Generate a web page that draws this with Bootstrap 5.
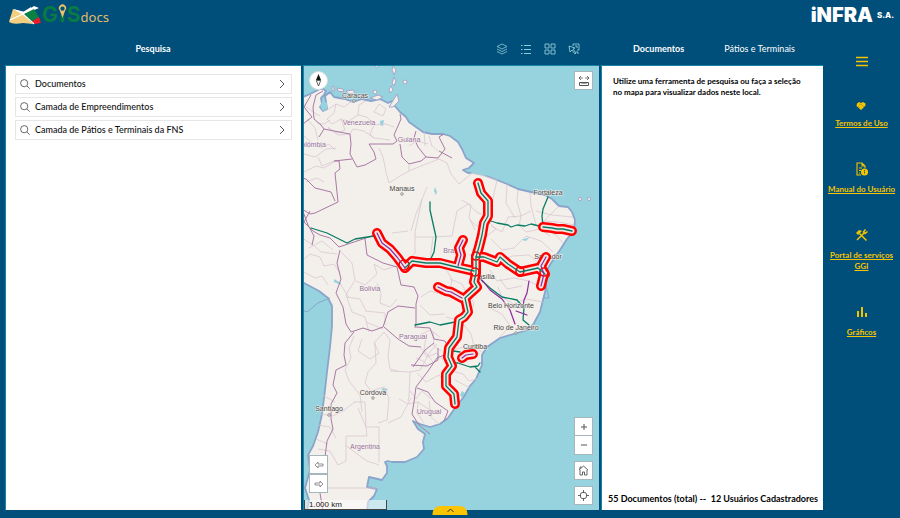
<!DOCTYPE html>
<html lang="pt-BR">
<head>
<meta charset="utf-8">
<meta name="viewport" content="width=device-width, initial-scale=1">
<title>GISdocs</title>
<link href="https://cdn.jsdelivr.net/npm/bootstrap@5.3.0/dist/css/bootstrap.min.css" rel="stylesheet">
<style>
  body { background: #004e7a; font-family: Lato, "Liberation Sans", sans-serif; font-size: 9px; line-height: 12px; color: #222; }
  .topbar { height: 36px; padding: 0 6px 6px 8px; }
  .brand-gis { font: 700 21px/24px Inter, sans-serif; color: #087a43; }
  .brand-docs { font: 400 13px/18px "Noto Sans", sans-serif; color: #e0bd68; }
  .brand-infra { font: 900 20px/24px Inter, sans-serif; }
  .brand-sa { font: 800 8px/12px Inter, sans-serif; }
  .shell { padding-left: 5px; }
  .workspace { display: grid; grid-template-columns: minmax(0, 4fr) minmax(0, 4fr) minmax(0, 3fr); grid-template-rows: 29px 1fr; column-gap: 2px; padding-bottom: 8px; min-width: 0; }
  .head-row { padding-bottom: 4px; }
  .sidebar { width: 77px; }
  .pane { border-top: 1px solid #1685a6; border-left: 1px solid #1685a6; }
  .plain-btn { border: 0; background: none; padding: 0; color: inherit; line-height: 0; }
  .tab-btn { font-size: 9px; line-height: 14px; }
  .tools { color: #8fcbd5; gap: 12px; padding-right: 19px; }
  .search-list { padding: 8px 9px; gap: 3px; }
  .search-item { height: 20px; border: 1px solid #e6e6e6; background: #fff; padding: 0 5px 0 4px; gap: 5px; font-size: 9px; line-height: 12px; font-weight: 500; color: #111; text-align: left; }
  .map-view { background: #97d3df; }
  .map-btn { width: 19px; height: 19px; background: #fff; border: 1px solid #a5b7bd; padding: 0; line-height: 0; color: #555; display: flex; align-items: center; justify-content: center; }
  .map-btn.dial { border-radius: 50%; border-color: #ddd; }
  .map-tl { position: absolute; left: 5px; top: 5px; }
  .map-tr { position: absolute; right: 6px; top: 5px; }
  .map-bl { position: absolute; left: 5px; bottom: 17px; }
  .map-br { position: absolute; right: 6px; bottom: 5px; gap: 6px; }
  .scale { position: absolute; left: 0; bottom: 0; width: 83px; height: 10px; background: rgba(255,255,255,.5); border: 1px solid #444; border-top: 0; padding-left: 4px; font: 8px/9px "Liberation Sans", sans-serif; color: #222; }
  .notice { padding: 10px 16px 0 11px; font-size: 8px; line-height: 11px; }
  .totals { padding: 0 5px 5px 6px; font-size: 9px; line-height: 12px; white-space: nowrap; }
  .side-link { color: #f5c400; font-size: 8px; line-height: 11px; font-weight: 700; gap: 8px; text-align: center; }
  .side-link:hover { color: #ffe26b; }
  .side-nav { padding-top: 16px; gap: 33px; }
  .menu-btn { color: #f5c400; margin-bottom: -8px; }
  .drawer-btn { position: fixed; bottom: 3px; left: 50%; transform: translateX(-50%); width: 35px; height: 9px; background: #fac400; border: 0; border-radius: 8px 8px 0 0; padding: 0; line-height: 0; color: #333; display: flex; align-items: center; justify-content: center; }
  .province { fill: none; stroke: #d5c3d0; stroke-width: .7; }
  .border-line { fill: none; stroke: #a97aa6; stroke-width: 1; }
  .halo { stroke: #f00; stroke-width: 10; }
  .halo-in { stroke: #f1e6e2; stroke-width: 5; }
  .rail { stroke: #087d64; stroke-width: 1.3; }
  .plan { stroke: #8d2aa0; stroke-width: 1.2; }
  .track { fill: none; stroke-linecap: round; stroke-linejoin: round; }
  .city { font: 7px "Liberation Sans", sans-serif; fill: #444; text-anchor: middle; paint-order: stroke; stroke: #f7f3ee; stroke-width: 1; }
  .nation { font: 7px "Liberation Sans", sans-serif; fill: #9672a0; text-anchor: middle; paint-order: stroke; stroke: #f7f3ee; stroke-width: 1; }
</style>
</head>
<body>
<div class="d-flex flex-column min-vh-100">
  <header class="topbar d-flex justify-content-between align-items-center">
    <div class="d-flex align-items-center">
      <svg width="34" height="20" viewBox="0 0 34 20" aria-hidden="true">
        <path d="M5 4 15 10 31 3 26 1 17 7Z" fill="#fff"/>
        <path d="M5 4 1 17Q5 20 15 18L25 19 15 9Z" fill="#f2cf80"/>
        <path d="M5 4 15 10 24 4 23 2 15 7Z" fill="#fff"/>
        <path d="M16 9 26 4 31 12 23 17Z" fill="#0b8145"/>
        <path d="M23 17 31 12 33 18 27 19Z" fill="#ed1c24"/>
        <path d="m15 9 11 10M2 15l13-6" stroke="#fff" stroke-width="1.2"/>
      </svg>
      <span class="brand-gis d-flex">G<svg width="9" height="24" viewBox="0 0 10 26" aria-hidden="true"><path d="M3 13h4v8H3z" fill="#087a43"/><path d="M5 16 2 8a4 4 0 1 1 6 0Z" fill="#e9c46a"/><circle cx="5" cy="6" r="2.4" fill="#004e7a"/></svg>S</span>
      <span class="brand-docs pt-1">docs</span>
    </div>
    <div class="d-flex align-items-center text-white">
      <span class="brand-infra">iNFRA</span><span class="brand-sa ms-1">S.A.</span>
    </div>
  </header>

  <div class="shell d-flex flex-grow-1">
    <main class="workspace flex-grow-1">
      <div class="head-row d-flex justify-content-center align-items-center text-white">
        <h1 class="tab-btn fw-bold m-0">Pesquisa</h1>
      </div>
      <div class="head-row tools d-flex justify-content-end align-items-center">
        <button class="plain-btn" aria-label="Camadas"><svg width="12" height="12" viewBox="0 0 12 12" fill="none" stroke="currentColor" stroke-width=".8"><path d="m6 1 5 2.500L6 6 1 3.500ZM1 6l5 2.500L11 6M1 8.500 6 11l5-2.500"/></svg></button>
        <button class="plain-btn" aria-label="Legenda"><svg width="12" height="12" viewBox="0 0 12 12" fill="none" stroke="currentColor"><path d="M1 2.500h1.500M4 2.500h7M1 6.500h1.500M4 6.500h7M1 10.500h1.500M4 10.500h7"/></svg></button>
        <button class="plain-btn" aria-label="Mapas base"><svg width="12" height="12" viewBox="0 0 12 12" fill="none" stroke="currentColor" stroke-width=".9"><path d="M1 1h4v4H1zM7 1h4v4H7zM1 7h4v4H1zM7 7h4v4H7z"/></svg></button>
        <button class="plain-btn" aria-label="Selecionar"><svg width="12" height="12" viewBox="0 0 12 12" fill="none" stroke="currentColor" stroke-width=".9"><path d="M5 3V1h6v6H9M7 3h2v2M1 3l1 6 2-2 3 4 1-1-3-4 2-1ZM8 9h2v2"/></svg></button>
      </div>
      <div class="head-row d-flex justify-content-center align-items-center text-white ps-1" role="tablist">
        <button class="plain-btn tab-btn fw-bold me-3" role="tab" aria-selected="true">Documentos</button>
        <button class="plain-btn tab-btn ms-4" role="tab" aria-selected="false">Pátios e Terminais</button>
      </div>

      <section class="pane bg-white">
        <div class="search-list d-flex flex-column">
          <button class="search-item d-flex align-items-center"><svg width="10" height="10" viewBox="0 0 10 10" fill="none" stroke="#444" stroke-width=".8"><circle cx="4.200" cy="4.200" r="3.600"/><path d="m7 7 2.700 2.700"/></svg><span class="flex-grow-1">Documentos</span><svg width="8" height="10" viewBox="0 0 8 10" fill="none" stroke="#444" stroke-width=".9"><path d="m2 1 4 4-4 4"/></svg></button>
          <button class="search-item d-flex align-items-center"><svg width="10" height="10" viewBox="0 0 10 10" fill="none" stroke="#444" stroke-width=".8"><circle cx="4.200" cy="4.200" r="3.600"/><path d="m7 7 2.700 2.700"/></svg><span class="flex-grow-1">Camada de Empreendimentos</span><svg width="8" height="10" viewBox="0 0 8 10" fill="none" stroke="#444" stroke-width=".9"><path d="m2 1 4 4-4 4"/></svg></button>
          <button class="search-item d-flex align-items-center"><svg width="10" height="10" viewBox="0 0 10 10" fill="none" stroke="#444" stroke-width=".8"><circle cx="4.200" cy="4.200" r="3.600"/><path d="m7 7 2.700 2.700"/></svg><span class="flex-grow-1">Camada de Pátios e Terminais da FNS</span><svg width="8" height="10" viewBox="0 0 8 10" fill="none" stroke="#444" stroke-width=".9"><path d="m2 1 4 4-4 4"/></svg></button>
        </div>
      </section>

      <section class="pane map-view position-relative overflow-hidden" aria-label="Mapa">
        <svg class="position-absolute top-0 start-0 w-100 h-100" viewBox="304 66 295 444" preserveAspectRatio="xMidYMid slice">
          <defs>
            <path id="land" d="M300 98 308 95 314 92 322 88 326 91 324 95 321 98 322 104 320 107 323 111 327 109 326 102 325 96 330 92 334 97 345 99 353 102 362 99 371 101 380 99 388 103 392 101 394 105 400 112 406 117 409 122 416 127 423 132 432 134 443 134 450 136 458 142 462 149 466 158 474 163 469 168 463 170 468 173 476 172 484 175 497 180 507 184 518 189 531 192 545 195 552 199 559 206 568 207 572 212 575 220 574 231 567 239 560 250 553 260 548 268 546 278 546 288 543 300 540 312 534 323 528 330 517 333 500 338 487 347 482 355 482 365 476 379 470 386 463 398 455 408 448 418 440 424 430 427 420 424 413 421 418 429 425 434 423 442 424 449 417 457 405 462 392 462 388 461 385 462 387 466 387 473 382 480 369 477 367 487 377 489 374 496 368 502 367 512H307L309 500 305 488 310 470 308 455 313 446 318 432 322 414 325 390 327 372 330 347 332 326 332 306 328 298 319 291 300 281Z"/>
            <g id="buffered">
              <path d="M478 183 481 193 488 201 488 216 484 223 482 235 479 247 476 257 476 273 474 282 477 287 465 298 468 312 464 317 459 320 457 337 449 348 448 357 452 366 446 374 446 386 454 394 455 404"/>
              <path d="m476 257 8 0 13 5 3-5 8 7 12 8 18-4 7 6"/>
              <path d="m543 227 9 1 5 1 6 0 9 2"/>
              <path d="m405 268 7-7 14 2 14 0 12 3 22 5"/>
            </g>
            <g id="bufferedPlan">
              <path d="m377 233 5 10 8 6 7 8 8 11"/>
              <path d="m463 240-4 8 2 7-3 11"/>
              <path d="m438 287 8 4 5 1 11 6"/>
              <path d="m546 257-5 9 3 8-3 12"/>
              <path d="m462 358 4-3 7-1"/>
            </g>
          </defs>
          <use href="#land" fill="#f3efea" stroke="#8ba4cb" stroke-width="1.800" stroke-linejoin="round"/>
          <g fill="#97d3df">
            <path d="m323 100 4 3 0 6-4 2-3-5ZM380 121l4-1-1 6-3-1ZM334 279l7 4 0 2-7-3ZM435 187l2 5-1 3-2-4ZM383 388l5 1-3 3-4-2ZM462 391l3 2-3 5-2-3ZM484 170l-15 1 5 3 13 2Z"/>
            <path d="m521 240 9-3-4 4-4-1Z"/>
          </g>
          <g fill="#f3efea" stroke="#a7a6ca" stroke-width="1">
            <path d="m389 107 8-13 2 7-6 6ZM393 66l3 4-2 5-2-5ZM394 77l2 4-2 5-2-3ZM391 86l2 4-3 3-1-4ZM332 87l2-1 0 5-2 0ZM337 88l6 1 1 3-6-1ZM346 91l7-1 2 3-6 1ZM370 98l8-3 5 2-6 3Z"/>
            <circle cx="405" cy="82" r="2"/><circle cx="375" cy="92" r="2"/><circle cx="580" cy="199" r="1.600"/><circle cx="589" cy="199" r="1.600"/><circle cx="377" cy="66" r="1.500"/>
          </g>
          <path d="M299 309 307 312 318 303 330 298M546 286l3 12-6 0" fill="none" stroke="#8ba4cb"/>
          <g class="province">
            <path d="M327 110 336 104 344 107 352 101M336 104 334 113 327 119 332 124 341 119 349 121 358 115 367 117 374 125 386 124 394 127M341 119 345 130 337 133 328 128M358 115 359 105 366 101M374 125 370 134 374 138M374 112 379 104 386 109 383 116 374 112M350 134 353 129 364 131 374 138 390 140M304 105 313 112 320 116M307 119 315 128 318 140M304 136 312 143 321 148 329 144 335 150M317 123 324 124 330 120"/>
            <path d="M328 127 338 135 350 134M304 172 316 166 324 168 334 162M304 154 315 157 326 149 336 148M318 157 322 166 334 161M324 182 317 178 306 182"/>
            <path d="M379 148 383 157 386 172 389 183 400 176 409 171 409 165M409 171 421 166 439 159 447 163 451 174 459 184 471 174M427 187 416 214 411 231M409 146 417 141 428 144M429 136 432 146 438 151M424 129 425 146"/>
            <path d="M471 173 484 176 497 180 493 198 490 215M518 190 517 201 521 216 519 226M530 193 531 206 536 225M559 206 552 213 543 222M536 211 551 215 573 217M543 221 558 222 574 225M548 230 557 236 563 243M531 211 521 216 508 217 502 232 491 226M520 226 526 232 540 229 550 236"/>
            <path d="M491 239 502 250 514 248 526 236 541 241 553 252M497 263 512 256 529 255 542 266M490 270 497 281 514 278 529 281 543 288M498 287 502 297 513 304 526 299 543 302M490 308 502 314 510 326 500 337M466 290 474 303 471 314 461 321 446 317M461 321 471 334 474 346 483 353M451 350 465 347 480 354M451 371 463 374 469 381 477 379M455 380 470 388"/>
            <path d="M415 232 415 253 402 265M422 199 415 232M408 231 392 233M415 237 433 237 452 236M433 237 430 260M452 236 457 211 468 204 478 213 488 216M450 279 462 284 468 296M421 297 430 291 441 294 449 287 464 297M461 200 471 205 469 217 475 230"/>
            <path d="M302 261 310 254 320 257 324 266 334 264 340 273M302 238 313 245 321 252 337 254M309 248 322 241 333 250M304 272 315 278 322 276 328 285M341 252 352 263 355 280 346 295 352 312 365 317M365 317 369 332M356 281 365 285 377 274 374 264 384 270 396 266M377 283 381 293 380 303 390 307 397 299M365 311 385 313 385 325M366 322 383 329M347 297 360 299 366 311M341 285 349 298"/>
            <path d="M354 336 349 348 351 358 345 370 349 381 360 395 362 412M362 339 358 351 370 359 379 353 374 343 384 332M384 332 390 340 388 356 390 369 398 371M390 371 410 372 409 396 408 401M375 343 376 363 368 372 365 383 371 391 384 387M384 387 389 398 387 420 378 423M388 423 401 417 411 398M410 372 420 370 430 352 437 344M358 408 366 427 367 436 346 436 346 461M367 427 379 427 379 462M345 445 367 461 379 465M318 449 330 451 338 465 346 461M319 488 379 488M354 402 365 402 366 427M321 414 333 416 343 411 355 402M322 395 335 402M318 425 330 427 336 438M316 439 328 444"/>
            <path d="M399 399 408 404 418 402 427 408 438 414M410 391 416 399 422 391 431 399M418 402 417 413 424 423M429 401 431 417 438 423M421 348 427 357 437 353 443 360M420 335 430 330 440 337M426 337 424 350 433 362M433 331 434 346 441 351M416 358 423 361 427 365"/>
            <path d="M484 217 496 229 484 238M507 184 506 203 515 218M470 220 478 227M445 268 452 279 450 291 440 295M420 305 430 315 445 314M500 279 507 289 522 286M417 373 426 382 439 375 447 384"/>
          </g>
          <g class="border-line">
            <path d="M323 91 316 95 313 107 314 119 321 125 324 129 319 137M324 129 334 131 350 134 351 144 350 154 357 167 365 165 376 159 374 152 369 144 378 144 393 144 397 141 394 135 401 119 400 114M400 144 402 157 409 164 421 161 426 157 418 147 414 138 416 131M426 157 438 158 445 149 439 137 444 134M439 151 452 158M334 161 339 161 340 169 335 173 338 202 315 213 310 214M334 161 352 159M310 214 302 209 308 225 314 236 312 245"/>
            <path d="M299 177 306 179 315 188 331 192 335 201M311 95 304 107 312 117 303 124M310 211 304 222 313 231 320 235 330 238 339 247 366 238 377 234M365 239 367 255 383 263 397 267 401 285 414 287 418 296 416 304 416 323 415 328M340 250 337 263 341 279 336 293 343 307 346 324 351 332M351 332 363 328 372 331 383 327 388 312 398 306 415 308M384 327 398 339 409 346 421 347M416 327 430 328 434 339 445 341 449 350"/>
            <path d="M354 332 345 343 344 355 346 365 336 370 333 385 337 393 331 404 331 419 333 429 327 441 325 457 327 466 323 480M411 365 427 366 438 360 438 348M413 367 425 350 434 343M449 353 437 358 428 371 416 387 414 402 412 414 419 425 430 434M417 388 428 392 435 402 448 411 444 421M320 493 323 511"/>
          </g>
          <g class="track rail">
            <path d="m311 228 16 5 20 10 8-4 19-3"/><path d="m430 202 0 8 6 27-2 15-5 11"/>
            <path d="m415 325 10-2 5-1 10 3 15-3"/><path d="m548 197-5 12-1 7 1 11"/>
            <path d="m488 220 9 3 11 2 3 2 6-2 8 1 6-2 12 3"/>
            <path d="m477 276 13 12 12 9 15 3 7 8-1 12 6 5M455 327l4-6M447 350l13 2M449 363h9l12 4 8-1 2-3M475 367l5 5"/>
          </g>
          <g class="track plan">
            <path d="m482 280 8 10 12 9 8 11 5 14M529 281l-2 12-3 7-1 7M516 311l11 4M478 274l5 8"/>
          </g>
          <g fill="#eee" stroke="#777" stroke-width=".7"><circle cx="354" cy="101" r="1.300"/><circle cx="402" cy="194" r="1.300"/><circle cx="373" cy="398" r="1.300"/><circle cx="329" cy="415" r="1.300"/><circle cx="516" cy="333" r="1.300"/></g>
          <g class="city">
            <text x="355" y="98">Caracas</text><text x="402" y="191">Manaus</text><text x="548" y="195">Fortaleza</text><text x="548" y="259">Salvador</text><text x="483" y="279">Brasília</text><text x="511" y="308">Belo Horizonte</text><text x="516" y="330">Rio de Janeiro</text><text x="475" y="349">Curitiba</text><text x="373" y="395">Córdova</text><text x="329" y="411">Santiago</text>
          </g>
          <g class="nation">
            <text x="359" y="125">Venezuela</text><text x="409" y="142">Guiana</text><text x="311" y="147">Colômbia</text><text x="370" y="291">Bolívia</text><text x="452" y="253">Brasil</text><text x="413" y="339">Paraguai</text><text x="429" y="414">Uruguai</text><text x="365" y="449">Argentina</text>
          </g>
          <g class="track">
            <use href="#buffered" class="halo"/><use href="#bufferedPlan" class="halo"/>
            <use href="#buffered" class="halo-in"/><use href="#bufferedPlan" class="halo-in"/>
            <g stroke="#f00" stroke-width="1.600"><circle cx="404" cy="265" r="5"/><circle cx="475" cy="272" r="4"/><circle cx="520" cy="271" r="4"/><circle cx="476" cy="256" r="4"/><circle cx="544" cy="272" r="4"/></g>
            <use href="#buffered" class="rail"/><use href="#bufferedPlan" class="plan"/>
          </g>
        </svg>
        <div class="map-tl"><button class="map-btn dial" aria-label="Bússola"><svg width="13" height="15" viewBox="0 0 13 15"><path d="M6.500 1 9 7H4Z" fill="#111"/><path d="M4.300 7.500h4.400L6.500 13Z" fill="#fff" stroke="#222" stroke-width=".7"/></svg></button></div>
        <div class="map-tr"><button class="map-btn" aria-label="Medir"><svg width="12" height="12" viewBox="0 0 12 12" fill="none" stroke="currentColor"><path d="M1 3h4M7 3h4M3 1 1 3l2 2M9 1l2 2-2 2" stroke-width=".8"/><path d="M1.500 7.500h9v3h-9zM4 7v2M6 7v2M8 7v2"/></svg></button></div>
        <div class="map-bl">
          <button class="map-btn" aria-label="Extensão anterior"><svg width="10" height="8" viewBox="0 0 10 8" fill="none" stroke="#777" stroke-width=".8"><path d="M4 1 1 4l3 3V5h5V3H4Z"/></svg></button>
          <button class="map-btn" aria-label="Próxima extensão"><svg width="10" height="8" viewBox="0 0 10 8" fill="none" stroke="#777" stroke-width=".8"><path d="M6 1 9 4 6 7V5H1V3h5Z"/></svg></button>
        </div>
        <div class="map-br d-flex flex-column">
          <div>
            <button class="map-btn" aria-label="Aumentar zoom"><svg width="8" height="8" viewBox="0 0 8 8" stroke="currentColor"><path d="M1 4h6M4 1v6"/></svg></button>
            <button class="map-btn border-top-0" aria-label="Diminuir zoom"><svg width="8" height="8" viewBox="0 0 8 8" stroke="currentColor"><path d="M1 4h6"/></svg></button>
          </div>
          <button class="map-btn" aria-label="Início"><svg width="11" height="11" viewBox="0 0 11 11" fill="none" stroke="currentColor" stroke-width=".9"><path d="M1 5 5.500 1 10 5M2 5v5h2.500V7h2v3H9V5M2 4V2h1.500"/></svg></button>
          <button class="map-btn" aria-label="Minha localização"><svg width="11" height="11" viewBox="0 0 11 11" fill="none" stroke="currentColor" stroke-width=".9"><circle cx="5.500" cy="5.500" r="3.300"/><path d="M5.500 0v3M5.500 8v3M0 5.500h3M8 5.500h3"/></svg></button>
        </div>
        <div class="scale">1.000 km</div>
      </section>

      <section class="pane bg-white d-flex flex-column justify-content-between text-black">
        <p class="notice fw-bold m-0">Utilize uma ferramenta de pesquisa ou faça a seleção no mapa para visualizar dados neste local.</p>
        <div class="totals d-flex justify-content-between fw-bold"><span>55 Documentos (total) --</span><span>12 Usuários Cadastradores</span></div>
      </section>
    </main>

    <nav class="sidebar side-nav flex-shrink-0 d-flex flex-column align-items-center" aria-label="Menu">
      <button class="plain-btn menu-btn" aria-label="Abrir menu"><svg width="12" height="19" viewBox="0 0 12 19" stroke="currentColor" stroke-width="1.400"><path d="M0 5.500h12M0 9.500h12M0 13.500h12"/></svg></button>
      <a href="#" class="side-link d-flex flex-column align-items-center"><svg width="14" height="14" viewBox="0 -4 14 14"><path d="M3 3.500 5 2l2 1 2-1 2.500 1.500v2L7 10 2.500 6Z" fill="currentColor"/><path d="m5 5 2-1 3 3M4 6l2 2" stroke="#9a8620" stroke-width=".6" fill="none"/></svg><span>Termos de Uso</span></a>
      <a href="#" class="side-link d-flex flex-column align-items-center"><svg width="14" height="14" viewBox="0 0 14 14" fill="none" stroke="currentColor" stroke-width="1.100"><path d="M6 13H2V1h5l3 3v2M7 1v3h3M4 6h3M4 8.500h2M4 11h1"/><circle cx="9.500" cy="10" r="3" fill="currentColor"/><path d="M9.500 8v1M9.500 9.500v2" stroke="#004e7a" stroke-width=".8"/></svg><span>Manual do Usuário</span></a>
      <a href="#" class="side-link d-flex flex-column align-items-center"><svg width="14" height="14" viewBox="0 0 14 14" fill="none" stroke="currentColor" stroke-width="1.500"><path d="m2 12 7-7M4.500 5.500l7 7"/><path d="m1 5 3-3 3 1-4 4Z" fill="currentColor" stroke="none"/><path d="M10.500 1.500 8.500 4l1.500 1.500 2.500-2"/></svg><span>Portal de serviços<br>GGI</span></a>
      <a href="#" class="side-link d-flex flex-column align-items-center"><svg width="14" height="14" viewBox="0 0 14 14" fill="currentColor"><path d="M2 6h2v6H2zM6 2h2v10H6zM10 8h2v4h-2z"/></svg><span>Gráficos</span></a>
    </nav>
  </div>
</div>
<button class="drawer-btn" aria-label="Abrir painel"><svg width="8" height="5" viewBox="0 0 8 5" fill="none" stroke="currentColor"><path d="m1 4 3-3 3 3"/></svg></button>
<script src="https://cdn.jsdelivr.net/npm/bootstrap@5.3.0/dist/js/bootstrap.bundle.min.js"></script>
</body>
</html>
